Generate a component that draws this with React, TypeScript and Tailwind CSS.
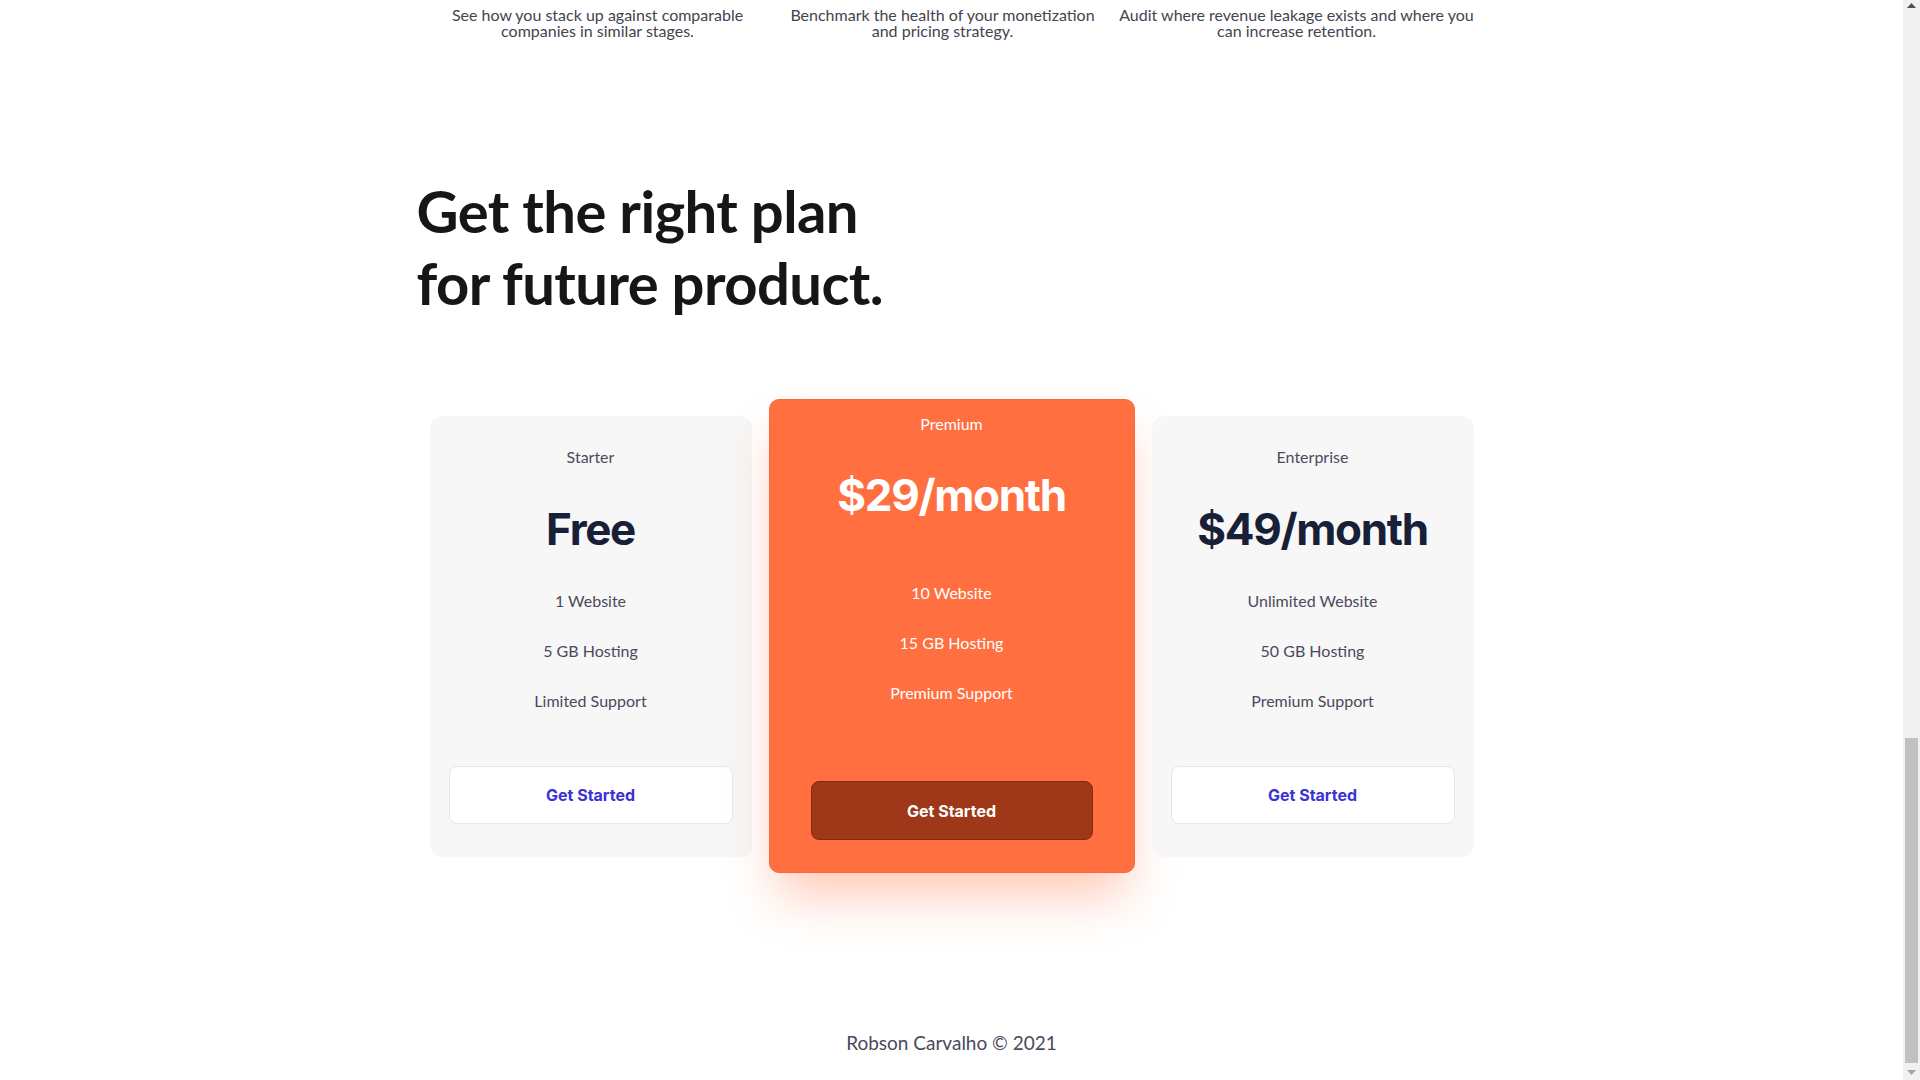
import React from "react";

interface Plan {
  name: string;
  price: string;
  features: string[];
  featured?: boolean;
}

const plans: Plan[] = [
  { name: "Starter", price: "Free", features: ["1 Website", "5 GB Hosting", "Limited Support"] },
  { name: "Premium", price: "$29/month", features: ["10 Website", "15 GB Hosting", "Premium Support"], featured: true },
  { name: "Enterprise", price: "$49/month", features: ["Unlimited Website", "50 GB Hosting", "Premium Support"] },
];

const body = "font-['Lato','Open_Sans',sans-serif]";
const display = "font-['Inter','Liberation_Sans',sans-serif]";

function PlanCard({ plan }: { plan: Plan }) {
  if (plan.featured) {
    return (
      <div className="flex w-[366px] flex-col items-center rounded-[10px] border border-[#f7683c] bg-[#ff6f40] px-[41px] pt-[12px] pb-[32px] text-white shadow-[0_30px_50px_-8px_rgba(255,112,64,0.38)]">
        <p className={`${body} text-base leading-6`}>{plan.name}</p>
        <p className={`${display} mt-[37px] text-[44px] leading-[44px] font-bold tracking-[-0.03em]`}>{plan.price}</p>
        <ul className={`${body} mt-[64px] flex flex-col items-center gap-[26px] text-base leading-6`}>
          {plan.features.map((f) => (
            <li key={f}>{f}</li>
          ))}
        </ul>
        <button className={`${display} mt-[76px] h-[59px] w-full rounded-lg border border-[#86290f] bg-[#9f3719] text-base font-bold text-white`}>
          Get Started
        </button>
      </div>
    );
  }

  return (
    <div className="flex w-[322px] flex-col items-center rounded-xl bg-[#f7f7f7] px-[19px] pt-[29px] pb-[33px]">
      <p className={`${body} text-base leading-6 text-[#4a4a5c]`}>{plan.name}</p>
      <p className={`${display} mt-[38px] text-[44px] leading-[44px] font-bold tracking-[-0.03em] text-[#172036]`}>{plan.price}</p>
      <ul className={`${body} mt-[38px] flex flex-col items-center gap-[26px] text-base leading-6 text-[#4a4a5c]`}>
        {plan.features.map((f) => (
          <li key={f}>{f}</li>
        ))}
      </ul>
      <button className={`${display} mt-[53px] h-[58px] w-full rounded-lg border border-[#e6e6ef] bg-white text-base font-bold text-[#3a32d4]`}>
        Get Started
      </button>
    </div>
  );
}

function Scrollbar() {
  return (
    <div className="flex h-full w-[17px] flex-col bg-[#f1f1f1]">
      <div className="flex h-[17px] items-start justify-center pt-[3px]">
        <svg width="9" height="5" viewBox="0 0 9 5">
          <path d="M4.5 0 L9 5 L0 5 Z" fill="#505050" />
        </svg>
      </div>
      <div className="flex flex-1 flex-col justify-end px-[2px]">
        <div className="h-[325px] bg-[#c1c1c1]" />
      </div>
      <div className="flex h-[17px] items-end justify-center pb-[5px]">
        <svg width="9" height="5" viewBox="0 0 9 5">
          <path d="M0 0 L9 0 L4.5 5 Z" fill="#a3a3a3" />
        </svg>
      </div>
    </div>
  );
}

export default function App() {
  return (
    <div className="flex h-screen w-full overflow-hidden bg-white">
      <main className="flex min-w-0 flex-1 flex-col items-center">
        {/* feature blurbs (tail end of previous section) */}
        <div className={`${body} flex pt-[7px] text-base leading-4 text-[#44444f]`}>
          <p className="w-[350px] text-center">
            See how you stack up against comparable
            <br />
            companies in similar stages.
          </p>
          <p className="w-[340px] text-center">
            Benchmark the health of your monetization
            <br />
            and pricing strategy.
          </p>
          <p className="w-[368px] text-center">
            Audit where revenue leakage exists and where you
            <br />
            can increase retention.
          </p>
        </div>

        {/* pricing */}
        <section className="mt-[136px] flex w-[1070px] flex-col">
          <h2 className={`${body} text-[58px] leading-[72px] font-bold tracking-[-0.01em] text-[#161616]`}>
            Get the right plan
            <br />
            for future product.
          </h2>

          <div className="mt-[80px] flex items-center justify-center gap-[17px]">
            {plans.map((p) => (
              <PlanCard key={p.name} plan={p} />
            ))}
          </div>
        </section>

        <footer className={`${body} mt-[156px] text-[19px] leading-7 text-[#4a4a5c]`}>Robson Carvalho © 2021</footer>
      </main>
      <Scrollbar />
    </div>
  );
}
